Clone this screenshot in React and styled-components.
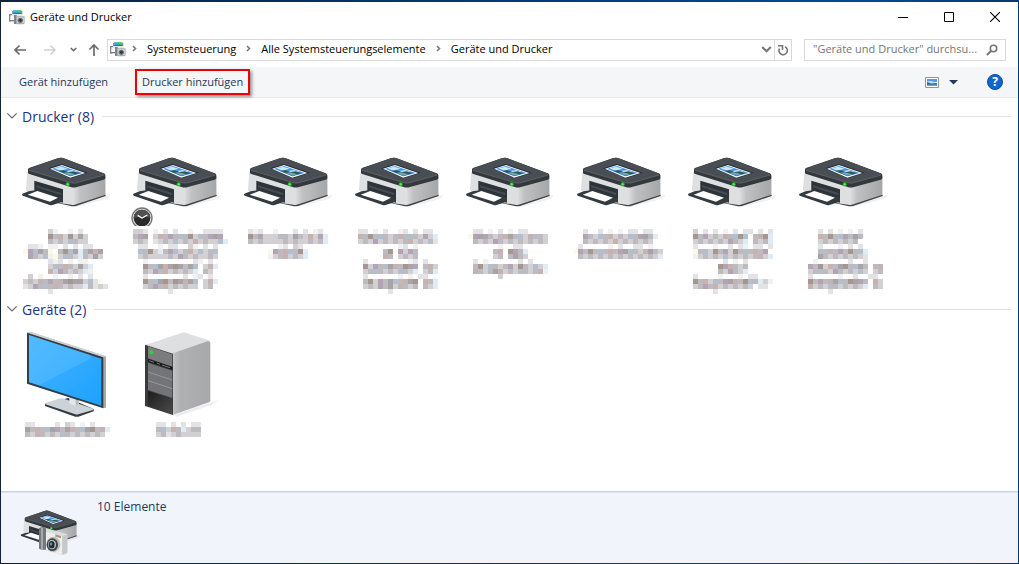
import React from 'react';
import styled, { createGlobalStyle } from 'styled-components';

const GlobalStyle = createGlobalStyle`
  * {
    box-sizing: border-box;
  }
  body {
    margin: 0;
    font-family: 'Open Sans', 'Noto Sans', sans-serif;
    font-size: 11px;
    color: #000;
  }
  button, input {
    font: inherit;
    color: inherit;
    border: 0;
    padding: 0;
    background: none;
  }
  svg {
    display: block;
    flex: none;
  }
`

const Desktop = styled.div`
  display: flex;
  min-height: 100vh;
  padding: 2px 1px 1px;
  background: linear-gradient(90deg, #14233a 0%, #032a57 20%, #00407f 60%, #004a94 85%, #043a70 100%);
`

const Window = styled.div`
  display: flex;
  flex-direction: column;
  flex: 1;
  min-width: 0;
  background: #fff;
`

const TitleBar = styled.header`
  display: flex;
  align-items: center;
  height: 30px;
  padding-left: 8px;
`

const Title = styled.h1`
  flex: 1;
  margin: 0 0 0 5px;
  padding-bottom: 2px;
  font-size: 11px;
  font-weight: 400;
`

const CaptionButton = styled.button`
  display: flex;
  align-items: center;
  justify-content: center;
  width: 46px;
  height: 30px;
`

const NavBar = styled.nav`
  display: flex;
  align-items: center;
  height: 35px;
  padding: 0 12px 0 11px;
`

const NavButton = styled.button`
  display: flex;
  justify-content: center;
  width: ${props => props.$width || 16}px;
  margin-right: ${props => props.$gap || 0}px;
  color: ${props => props.disabled ? '#d2d2d2' : '#6a6a6a'};
`

const AddressBar = styled.div`
  display: flex;
  align-items: center;
  flex: 1;
  height: 22px;
  padding-left: 2px;
  border: 1px solid #d9d9d9;
`

const Crumbs = styled.ol`
  display: flex;
  flex: 1;
  margin: 0 0 0 4px;
  padding: 0 0 2px;
  list-style: none;
`

const Crumb = styled.li`
  display: flex;
  align-items: center;
  color: #777;
`

const CrumbLink = styled.a`
  margin: 0 8px;
  color: #000;
  text-decoration: none;
`

const AddressButton = styled.button`
  display: flex;
  align-items: center;
  justify-content: center;
  width: 17px;
  height: 20px;
  color: #777;
  border-left: 1px solid ${props => props.$divided ? '#d9d9d9' : 'transparent'};
`

const SearchBox = styled.label`
  display: flex;
  align-items: center;
  width: 202px;
  height: 22px;
  margin-left: 12px;
  padding: 0 7px 0 8px;
  border: 1px solid #d9d9d9;
  color: #777;
`

const SearchInput = styled.input`
  flex: 1;
  min-width: 0;
  padding-bottom: 2px;
  outline: 0;
  &::placeholder {
    color: #767676;
    opacity: 1;
  }
`

const Toolbar = styled.div`
  display: flex;
  align-items: center;
  height: 31px;
  padding: 0 15px 0 18px;
  background: #f5f6f7;
  border-bottom: 1px solid #e8eaec;
  color: #1e395b;
`

const Command = styled.button`
  height: 26px;
  padding-bottom: 2px;
  white-space: nowrap;
`

const MarkedCommand = styled(Command)`
  width: 115px;
  margin-left: 27px;
  border: 2px solid #f00000;
  box-shadow: 2px 2px 3px rgba(0, 0, 0, 0.4);
`

const ToolbarRight = styled.div`
  display: flex;
  align-items: center;
  margin-left: auto;
`

const IconButton = styled.button`
  display: flex;
  margin-left: ${props => props.$gap || 0}px;
`

const HelpButton = styled.button`
  width: 16px;
  height: 16px;
  margin-left: 29px;
  border: 1px solid #0a4a9a;
  border-radius: 50%;
  background: #0d67cf;
  color: #fff;
  font-size: 12px;
  font-weight: 700;
  line-height: 14px;
`

const Content = styled.main`
  flex: 1;
  padding-top: 3px;
`

const GroupHeader = styled.div`
  display: flex;
  align-items: center;
  height: 30px;
  padding: 0 7px 0 5px;
  color: #6b6b6b;
  &::after {
    content: '';
    flex: 1;
    height: 1px;
    margin-left: 8px;
    background: #e2e2e2;
  }
`

const GroupTitle = styled.h2`
  margin: 0 0 0 4px;
  font-size: 14px;
  font-weight: 400;
  color: #1e3287;
`

const Tiles = styled.ul`
  display: grid;
  grid-template-columns: repeat(auto-fill, 111px);
  margin: 0;
  padding: 6px 0 0 9px;
  list-style: none;
`

const Tile = styled.li`
  position: relative;
`

const IconSlot = styled.div`
  display: flex;
  align-items: center;
  justify-content: center;
  width: 110px;
  height: 90px;
  margin-bottom: 2px;
`

const Badge = styled.div`
  position: absolute;
  top: 70px;
  left: 10px;
`

const MosaicSvg = styled.svg`
  position: relative;
  overflow: visible;
`

const StatusBar = styled.footer`
  display: flex;
  align-items: flex-start;
  height: 72px;
  padding: 5px 19px 0;
  border-top: 1px solid #c5d3e0;
  background: #f1f4fb;
  box-shadow: inset 0 1px 1px #dce5f0;
  color: #1e395b;
`

const StatusIcon = styled.div`
  margin-top: 12px;
`

const StatusText = styled.p`
  margin: 0 0 0 16px;
  font-size: 12px;
  line-height: 20px;
`

const DevicesIcon = () => (
  <svg width="16" height="15" viewBox="0 0 48 45">
    <path d="M9 4 14 1h22l4 3v9H9z" fill="#8b969d" />
    <path d="M13 1h12v8H13z" fill="#3fb4f2" />
    <path d="M24 1h12v8H24z" fill="#3fd158" />
    <path d="M13 8h24v4H13z" fill="#1b74c4" />
    <path d="M3 14h38v7H3z" fill="#e6e8ea" />
    <path d="M0 12h9v4H4v19H0z" fill="#7d8489" />
    <path d="M5 17h9v12H5z" fill="#f4f4f4" />
    <path d="M3 30h12v4H3z" fill="#757c81" />
    <path d="M15 15h8v27h-8z" fill="#7e858a" />
    <path d="M23 19h24v21l-4 3H23z" fill="#a9aeb2" />
    <path d="M25 22h19v17H25z" fill="#dddfe1" />
    <circle cx="34" cy="31" r="8" fill="#6a7176" />
    <circle cx="34" cy="31" r="4" fill="#2b3236" />
  </svg>
)

const Chevron = ({ size = 9, dir = 'down', stroke = 1.6 }) => (
  <svg width={size} height={size} viewBox="0 0 9 9" fill="none" stroke="currentColor" strokeWidth={stroke}>
    <path d={dir === 'down' ? 'M1 2.5 4.5 6 8 2.5' : 'M3 2 5.5 4.5 3 7'} />
  </svg>
)

const Arrow = ({ d }) => (
  <svg width="14" height="14" viewBox="0 0 14 14" fill="none" stroke="currentColor" strokeWidth="1.7">
    <path d={d} />
  </svg>
)

const PrinterShape = () => (
  <g>
    <path d="M192 184 290 152l14-4-12 14-94 24z" fill="#000" opacity=".06" />
    <path d="M52 80 180 118l106-22v52q0 4-5 6l-82 26q-8 3-16 1l-25-7-106-34q-4-2-4-7z" fill="#dedfe0" />
    <path d="M192 122 286 94v54q0 4-5 6l-89 28z" fill="url(#printer-side)" />
    <path d="M126 170 183 179q8 2 16-1l88-29v4l-89 30q-8 2-16 0l-30-7z" fill="#3d4348" />
    <path d="M73 107 159 133v40l-86-27z" fill="#2d3439" />
    <path d="M78 121 154 144v7l-76-24z" fill="#454d53" />
    <path d="M37 146 56 139 82 135 159 159v11l-34 11q-3 0-6-1l-81-28q-3-3-1-6z" fill="#343b40" />
    <path d="M53 149 82 138l62 20-24 12z" fill="#fff" />
    <path d="M54 73q0-3 5-5l84-28q8-3 16-1l122 46q5 2 5 6v9q0 3-5 4l-80 22q-10 3-19 0L58 87q-4-1-4-4z" fill="#32383c" />
    <path d="M56 71 146 39q7-2 13 0l124 47q2 3-2 4l-80 23q-9 2-17 0L58 76q-4-2-2-5z" fill="#484e53" />
    <path d="M57 76 183 113q9 3 18 0l82-23" fill="none" stroke="#6b7176" strokeWidth="2" />
    <path d="M115 70 155 57l78 26-51 17z" fill="#252a2e" />
    <path d="M120 71 156 60l70 24-45 14z" fill="#f4f8fb" />
    <path d="M126 71 156 63l62 21-37 10z" fill="#4595ee" />
    <path d="m134 70 20-5 19 6-22 6zM166 79l20-4 18 6-18 4z" fill="#c9e8fa" />
    <path d="m144 77 17-1 15 5 15-2 18 6-28 8z" fill="#2e5b4b" />
    <path d="m160 83 14-1 22 6-15 4z" fill="#6fa5c4" />
    <circle cx="173" cy="118" r="6" fill="#27b52c" />
    <circle cx="173" cy="118" r="3" fill="#5cfa55" />
  </g>
)

const PrinterSide = () => (
  <defs>
    <linearGradient id="printer-side">
      <stop offset="0" stopColor="#dcdcdd" />
      <stop offset=".2" stopColor="#c0c1c3" />
      <stop offset="1" stopColor="#a5a6a8" />
    </linearGradient>
  </defs>
)

const PrinterIcon = () => (
  <svg width="90" height="65" viewBox="30 15 270 195">
    <PrinterSide />
    <PrinterShape />
  </svg>
)

const MonitorIcon = () => (
  <svg width="90" height="90" viewBox="60 102 270 270">
    <defs>
      <linearGradient id="screen" x1="0" y1="0" x2="1" y2="1">
        <stop offset="0" stopColor="#45b5ff" />
        <stop offset="1" stopColor="#1ea1ff" />
      </linearGradient>
    </defs>
    <path d="m135 323 70-17 76 33v7l-46 16q-5 1-9 0l-91-32z" fill="#343c42" />
    <path d="m135 321 42-13q8-2 15 0l88 30q2 2-1 4l-44 13q-5 1-9 0l-90-30q-3-2-1-4z" fill="#cbd3d9" />
    <path d="M208 300h28v25l-8 5-20-8z" fill="#e4e7e9" />
    <path d="M226 305h10v20l-8 5z" fill="#b5bcc1" />
    <path d="m81 110 9-3 228 74v154l-11 2z" fill="#a5a9ac" />
    <path d="m81 110 9-3 228 74-10 4z" fill="#cfd1d3" />
    <path d="m81 110 229 74v153L81 263z" fill="#323d46" />
    <path d="m87 117 217 71v141L87 259z" fill="url(#screen)" />
    <path d="m87 117 184 60v11L118 267l-31-9z" fill="#6bc6ff" opacity=".35" />
  </svg>
)

const ServerIcon = () => (
  <svg width="90" height="90" viewBox="393 102 270 270">
    <defs>
      <linearGradient id="server-side" x1="0" y1="0" x2="1" y2="0">
        <stop offset="0" stopColor="#c3c4c5" />
        <stop offset=".2" stopColor="#b0b1b2" />
        <stop offset="1" stopColor="#a7a8a9" />
      </linearGradient>
      <linearGradient id="server-base" x1="0" y1="0" x2="1" y2="1">
        <stop offset="0" stopColor="#1c1c1c" />
        <stop offset="1" stopColor="#4b4b4b" />
      </linearGradient>
    </defs>
    <path d="m520 357 110-37 26-8-20 14-105 36z" fill="#000" opacity=".07" />
    <path d="m436 147 110-37q5-2 10 0l70 23q5 2 5 7l-112 35z" fill="#dedfe0" />
    <path d="m518 172 105-36q8-1 8 8v169q0 4-4 6l-109 38z" fill="url(#server-side)" />
    <path d="m435 146 84 27v184l-84-27z" fill="#3a3a3b" />
    <path d="m444 151 73 24v37l-73-25z" fill="#7b7c7e" />
    <path d="m444 189 73 24v8l-73-24z" fill="#17181a" />
    <path d="m444 200 73 24v82l-73-24z" fill="#737477" />
    <path d="m444 228 73 24m-73 2 73 24" stroke="#a6a7a9" strokeWidth="2" />
    <path d="m444 285 73 24v44l-73-24z" fill="url(#server-base)" />
    <path d="m448 194 14 5m8 2 10 4m6 2 24 8" stroke="#77797c" strokeWidth="3" />
    <circle cx="454" cy="169" r="6" fill="#2bd437" />
  </svg>
)

const ClockIcon = () => (
  <svg width="22" height="19" viewBox="0 0 66 57">
    <circle cx="33" cy="33" r="32" fill="#73767a" />
    <circle cx="33" cy="33" r="28" fill="#e2e2e2" />
    <circle cx="33" cy="33" r="25" fill="#2b2b2b" />
    <path d="M8 33a25 25 0 0 1 50 0Q33 24 8 33z" fill="#505050" />
    <path d="m20 25 13 8 16-9" fill="none" stroke="#fff" strokeWidth="4" />
  </svg>
)

const PrinterCameraIcon = () => (
  <svg width="61" height="48" viewBox="60 87 183 144">
    <g transform="translate(38 66) scale(.67)">
      <PrinterShape />
    </g>
    <path d="M117 145q10-7 21-2v66q-10 2-21-3z" fill="#75797c" />
    <path d="M123 143h6v66l-6-1z" fill="#a5a9ac" />
    <path d="m138 152 8-4 52 13q4 1 4 5v51q0 4-4 5l-13 3-47-14z" fill="#d9dbdc" />
    <path d="m138 155 49 13v56l-49-14z" fill="#ededed" />
    <path d="m187 168 15-4v54l-15 6z" fill="#c5c7c9" />
    <path d="m166 163 17 5v7l-17-5z" fill="#a59a80" />
    <ellipse cx="160" cy="193" rx="21" ry="23" fill="#b9bcbe" />
    <ellipse cx="157" cy="194" rx="17" ry="19" fill="#3e4347" />
    <ellipse cx="156" cy="194" rx="12" ry="14" fill="#c4c8ca" />
    <ellipse cx="155" cy="194" rx="9" ry="11" fill="#24292d" />
    <ellipse cx="153" cy="192" rx="4" ry="5" fill="#4f93a5" />
  </svg>
)

// Names are redacted: one character per 5px cell, '.' stays empty
const CELL = 5
const shades = {
  1: '#f1f1f2',
  2: '#e3e2e4',
  3: '#d2d0d3',
  4: '#bebbc0',
  5: '#a8a3a9',
  p: '#b3a3b5',
  r: '#c6b2b0',
  b: '#b3bfcd',
  n: '#a3978f',
  t: '#dfecf5',
  y: '#fbf9ea',
}

const Mosaic = ({ rows, shift = 0 }) => (
  <MosaicSvg width="111" height={rows.length * CELL} aria-hidden="true" shapeRendering="crispEdges">
    {rows.map((row, y) => row.split('').map((key, x) => shades[key] && (
      <rect key={`${x}-${y}`} x={x * CELL + shift} y={y * CELL} width={CELL} height={CELL} fill={shades[key]} />
    )))}
  </MosaicSvg>
)

const printers = [
  {
    rows: [
      '.......31..1.2..',
      '.......n4r3n353.',
      '.......4343b433.',
      '...221.11.2.2.22.',
      '..ypb54y.4nb5t45r5',
      '...p43b1y3b43t4353',
      '.......212.1.11',
      '.......3b4r4353t',
      '.......r3p4343t1',
      '...3.1..1..1.2.2.',
      '..343r4p4r5n553b2y',
      '..23p4b4r43433t4232',
      '.......2',
    ],
  },
  {
    badge: true,
    rows: [
      '..332.1.2.2..1..2222.',
      '..4p5.3r4p4b4n3b4p5p',
      '..343.2343b343r3433bt',
      '...22..1.22..31.2.2',
      '...b4n3t4pb34r3b34b',
      '...34333343p4343343',
      '....1.........21.2',
      '....n4b5r5n545b.3rt',
      '....43p4r34343t.43',
      '....2.......2.12.2',
      '....n4b5n4n5r5b.3rt',
      '....34p4r343433.34',
      '.........2.',
    ],
  },
  {
    rows: [
      '...212..1...2.2.12.',
      '...n4p333443543r3pt',
      '...434333343433434t',
      '.........12.32..',
      '.......yp4rb4nt.',
      '.......134r343t.',
    ],
  },
  {
    rows: [
      '...22.1.2..12.2.22.',
      '...r4n4b434r4b43p3t',
      '...343p343434r343b2',
      '...........12.1',
      '........4n.p3p4',
      '........r4.3434',
      '....2........12.2',
      '....n3p4b5r4n5p.4r3',
      '....34b4343b43t.34t',
      '....2......1.1.22',
      '....4n3p45b4r5n.r4t',
      '....343p453r434.43t',
      '.........2',
    ],
  },
  {
    rows: [
      '....22.1.2.1.22..',
      '...yp5p434r54b3rb43',
      '....4343p4343434343',
      '.........1..22',
      '........4r.np4t',
      '........34.4543',
      '....2.1......2.2.',
      '....4n3b434p3n43b3t',
      '....r4345r343b434r1',
      '.........3',
    ],
  },
  {
    rows: [
      '....2..2.1.1.22.22.',
      '....p43b4r343b4p54t',
      '....434343r3434343',
      '...2.....1.2..22.1.',
      '..yp4n4b4r4p5b43r543',
      '...4343434343434343t',
    ],
  },
  {
    rows: [
      '....3.2.2.1.2.22.2.2',
      '....n4p343r4bnb.4rnt',
      '....3434343p43t.434t',
      '....2...1..2.21.22.2',
      '....y4b3n4p3n4b4r4p',
      '....134343b343434r3t',
      '..........2.1.2',
      '.........npr434',
      '.........43p43t',
      '....2....1...1.22..',
      '....n4r3b4p5r4nb4t31',
      '....34p4r3434343.22',
      '........2',
    ],
  },
  {
    rows: [
      '.......2.2.1.1.2',
      '.......r4n4bp454',
      '.......34343434',
      '.......2...1.2.2',
      '.......4br4p4n4bt',
      '.......5434343432',
      '......1......2..2',
      '.....p4n3r45n4b54.4r',
      '.....34b43p4343b3.34',
      '.....2.....1..2..22',
      '.....n4p4r5b4n5p4.r3',
      '.....r343b434343t.43',
      '.........2',
    ],
  },
]

const devices = [
  {
    icon: <MonitorIcon />,
    rows: [
      '...22....2.32.1.2..',
      '...54r4b5p45r4b5n4rt',
      '...43r4343b43434343',
    ],
  },
  {
    icon: <ServerIcon />,
    rows: [
      '.......22.2.2.22',
      '.......4b3r4t344',
      '.......342343333',
    ],
  },
]

const crumbs = ['Systemsteuerung', 'Alle Systemsteuerungselemente', 'Geräte und Drucker']

const Group = ({ title, children }) => (
  <section>
    <GroupHeader>
      <Chevron size={12} stroke={0.9} />
      <GroupTitle>{title}</GroupTitle>
    </GroupHeader>
    <Tiles>{children}</Tiles>
  </section>
)

const App = () => {
  return (
    <Desktop>
      <GlobalStyle />
      <Window>
        <TitleBar>
          <DevicesIcon />
          <Title>Geräte und Drucker</Title>
          <CaptionButton aria-label="Minimieren">
            <svg width="10" height="10"><path d="M0 5.5h10" stroke="#000" /></svg>
          </CaptionButton>
          <CaptionButton aria-label="Maximieren">
            <svg width="10" height="10"><path d="M.5.5h9v9h-9z" fill="none" stroke="#000" /></svg>
          </CaptionButton>
          <CaptionButton aria-label="Schließen">
            <svg width="10" height="10"><path d="m0 0 10 10M10 0 0 10" stroke="#000" strokeWidth="1.1" /></svg>
          </CaptionButton>
        </TitleBar>

        <NavBar>
          <NavButton aria-label="Zurück" $gap={14}><Arrow d="M13 7H2M6.500 2.500 2 7l4.500 4.500" /></NavButton>
          <NavButton aria-label="Vorwärts" disabled $gap={9}><Arrow d="M1 7h11M7.500 2.500 12 7l-4.500 4.500" /></NavButton>
          <NavButton aria-label="Zuletzt besucht" $width={12} $gap={7}><Chevron size={7} stroke={2} /></NavButton>
          <NavButton aria-label="Nach oben" $gap={5}><Arrow d="M7 13V2M2.500 6.500 7 2l4.500 4.500" /></NavButton>
          <AddressBar>
            <DevicesIcon />
            <Crumbs>
              {crumbs.map((name, i) => (
                <Crumb key={name}>
                  <Chevron size={9} dir="right" />
                  <CrumbLink href={`#${i}`}>{name}</CrumbLink>
                </Crumb>
              ))}
            </Crumbs>
            <AddressButton aria-label="Vorherige Orte"><Chevron size={11} stroke={1.7} /></AddressButton>
            <AddressButton aria-label="Aktualisieren" $divided>
              <svg width="12" height="12" viewBox="0 0 12 12" fill="none" stroke="currentColor" strokeWidth="1.6">
                <path d="M2.500 4.500A4.200 4.200 0 1 0 8 2.800" />
                <path d="M1 1.800h4.500v4.200" />
              </svg>
            </AddressButton>
          </AddressBar>
          <SearchBox>
            <SearchInput type="text" aria-label="Suchen" placeholder={'"Geräte und Drucker" durchsu...'} />
            <svg width="12" height="12" viewBox="0 0 12 12" fill="none" stroke="currentColor" strokeWidth="1.6">
              <circle cx="7.500" cy="4.500" r="3.200" />
              <path d="M5 7 .800 11" strokeWidth="2" />
            </svg>
          </SearchBox>
        </NavBar>

        <Toolbar>
          <Command>Gerät hinzufügen</Command>
          <MarkedCommand>Drucker hinzufügen</MarkedCommand>
          <ToolbarRight>
            <IconButton aria-label="Ansicht ändern">
              <svg width="14" height="11" viewBox="0 0 14 11">
                <path d="M.5.5h13v10H.5z" fill="#fff" stroke="#8f959b" />
                <path d="M2 2h10v3H2z" fill="#4f9df0" />
                <path d="M2 4.500 6 4l6 2v1H2z" fill="#c6e2f4" />
                <path d="m2 5 4 1.500 6-.500v3H2z" fill="#2c6079" />
                <path d="M2 7.500h10V9H2z" fill="#6aa5cf" />
              </svg>
            </IconButton>
            <IconButton aria-label="Weitere Optionen" $gap={10}>
              <svg width="9" height="5"><path d="M0 0h9L4.500 4.500z" fill="#1e395b" /></svg>
            </IconButton>
            <HelpButton aria-label="Hilfe">?</HelpButton>
          </ToolbarRight>
        </Toolbar>

        <Content>
          <Group title="Drucker (8)">
            {printers.map((item, i) => (
              <Tile key={i}>
                <IconSlot><PrinterIcon /></IconSlot>
                {item.badge && <Badge><ClockIcon /></Badge>}
                {/* tiles are 111px apart, the cells keep one common raster */}
                <Mosaic rows={item.rows} shift={3 - i} />
              </Tile>
            ))}
          </Group>
          <Group title="Geräte (2)">
            {devices.map((item, i) => (
              <Tile key={i}>
                <IconSlot>{item.icon}</IconSlot>
                <Mosaic rows={item.rows} />
              </Tile>
            ))}
          </Group>
        </Content>

        <StatusBar>
          <StatusIcon><PrinterCameraIcon /></StatusIcon>
          <StatusText>10 Elemente</StatusText>
        </StatusBar>
      </Window>
    </Desktop>
  );
}

export default App;
